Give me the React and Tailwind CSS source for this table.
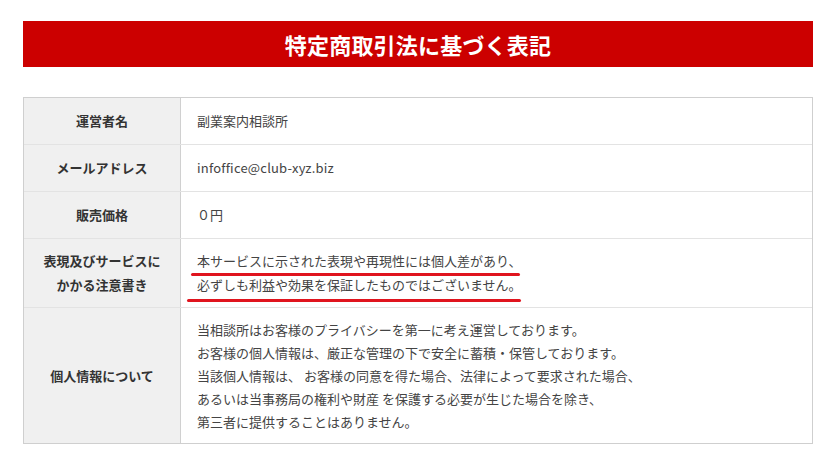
import React from "react";

const font = { fontFamily: '"Noto Sans CJK JP", "Noto Sans", sans-serif' };

function Row({ label, children, py = "py-[11px]", last = false, rel = false }) {
  return (
    <div className={`flex ${last ? "" : "border-b border-[#e3e3e3]"}`}>
      <div className={`w-[157px] shrink-0 bg-[#f0f0f0] border-r border-[#d0d0d0] flex items-center justify-center text-center font-bold text-[13px] leading-[24px] text-[#333] ${py}`}>
        {label}
      </div>
      <div className={`flex-1 pl-[16px] pr-4 text-[13px] text-[#444] ${py} ${rel ? "relative" : ""}`}>
        {children}
      </div>
    </div>
  );
}

export default function App() {
  return (
    <div className="w-[840px] h-[475px] bg-white" style={font}>
      <div className="pt-[21px] px-[23px] w-[836px]">
        <div className="h-[46px] bg-[#cc0000] flex items-center justify-center">
          <h1 className="text-white font-bold text-[22px] leading-none tracking-[0.2px]">
            特定商取引法に基づく表記
          </h1>
        </div>
        <div className="mt-[30px] border border-[#cfcfcf]">
          <Row label="運営者名">
            <div className="leading-[24px]">副業案内相談所</div>
          </Row>
          <Row label="メールアドレス">
            <div className="leading-[24px] tracking-[0.2px]">infoffice@club-xyz.biz</div>
          </Row>
          <Row label="販売価格">
            <div className="leading-[24px]">０円</div>
          </Row>
          <Row
            label={
              <span>
                表現及びサービスに
                <br />
                かかる注意書き
              </span>
            }
            py="py-[10px]"
            rel
          >
            <div className="leading-[24px]">本サービスに示された表現や再現性には個人差があり、</div>
            <div className="leading-[24px]">必ずしも利益や効果を保証したものではございません。</div>
            <div className="absolute left-[10px] top-[34px] w-[329px] h-[3px] rounded-full bg-[#e0141e]" />
            <div className="absolute left-[6px] top-[60px] w-[334px] h-[3px] rounded-full bg-[#e0141e]" />
          </Row>
          <Row label="個人情報について" py="py-[10px]" last>
            <div className="leading-[23px]">
              <div>当相談所はお客様のプライバシーを第一に考え運営しております。</div>
              <div>お客様の個人情報は、厳正な管理の下で安全に蓄積・保管しております。</div>
              <div>当該個人情報は、 お客様の同意を得た場合、法律によって要求された場合、</div>
              <div>あるいは当事務局の権利や財産 を保護する必要が生じた場合を除き、</div>
              <div>第三者に提供することはありません。</div>
            </div>
          </Row>
        </div>
      </div>
    </div>
  );
}
